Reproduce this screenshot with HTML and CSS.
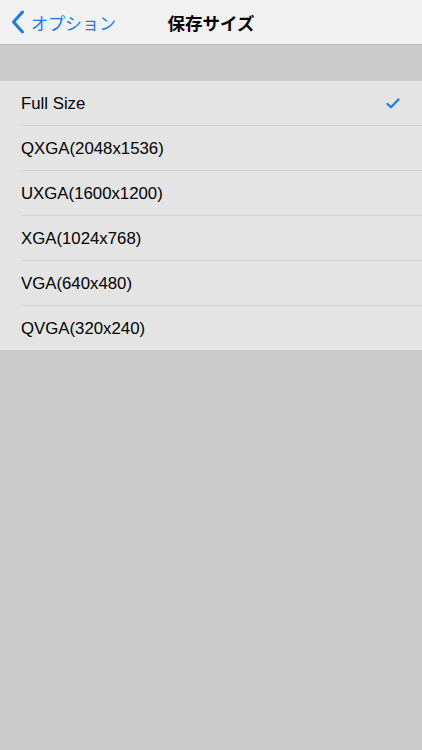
FILE: index.html
```html
<!DOCTYPE html>
<html lang="ja">
<head>
    <meta charset="UTF-8">
    <meta name="viewport" content="width=device-width, initial-scale=1.0">
    <title>保存サイズ</title>
    <link rel="stylesheet" href="styles.css">
</head>
<body>
    <div class="nav-bar">
        <a class="nav-back" href="javascript:;">
            <svg class="nav-chevron" width="14" height="24" viewBox="0 0 14 24">
                <path d="M11.5 2 L2.5 12 L11.5 22" fill="none" stroke="#1a7be6" stroke-width="3" stroke-linecap="round" stroke-linejoin="round"/>
            </svg>
            <span>オプション</span>
        </a>
        <div class="nav-title">保存サイズ</div>
    </div>

    <div class="gap"></div>

    <ul class="size-list">
        <li class="size-item">
            <span>Full Size</span>
            <svg class="check" width="14" height="11" viewBox="0 0 14 11">
                <path d="M1.5 6 L5 9.2 L12.5 1.5" fill="none" stroke="#1a7be6" stroke-width="2.2" stroke-linecap="round" stroke-linejoin="round"/>
            </svg>
        </li>
        <li class="size-item"><span>QXGA(2048x1536)</span></li>
        <li class="size-item"><span>UXGA(1600x1200)</span></li>
        <li class="size-item"><span>XGA(1024x768)</span></li>
        <li class="size-item"><span>VGA(640x480)</span></li>
        <li class="size-item"><span>QVGA(320x240)</span></li>
    </ul>
</body>
</html>
```

FILE: styles.css
```css
* {
    padding: 0px;
    margin: 0px;
}
html, body {
    height: 100%;
}
body {
    background: #cbcbcb;
    font-family: "Liberation Sans", "Noto Sans CJK JP", sans-serif;
    color: #000000;
}
a {
    text-decoration: none;
}
.nav-bar {
    height: 44px;
    background: #f1f1f1;
    border-bottom: 1px solid #b9b9b9;
    display: flex;
    align-items: center;
    justify-content: center;
    position: relative;
}
.nav-back {
    position: absolute;
    left: 11px;
    top: 0px;
    height: 44px;
    display: flex;
    align-items: center;
    gap: 6px;
    color: #1a7be6;
    font-size: 17px;
    font-family: "Noto Sans CJK JP", sans-serif;
}
.nav-chevron {
    display: block;
}
.nav-title {
    font-size: 17.5px;
    font-weight: bold;
    font-family: "Noto Sans CJK JP", sans-serif;
}
.gap {
    height: 36px;
}
.size-list {
    list-style: none;
    background: #e4e4e4;
}
.size-item {
    height: 44px;
    margin-left: 21px;
    padding-right: 22px;
    display: flex;
    align-items: center;
    justify-content: space-between;
    font-size: 16.8px;
    border-bottom: 1px solid #d3d3d3;
}
.size-item span {
    padding-top: 1px;
}
.size-item:last-child {
    height: 44px;
    border-bottom: none;
}
.check {
    display: block;
}
```
